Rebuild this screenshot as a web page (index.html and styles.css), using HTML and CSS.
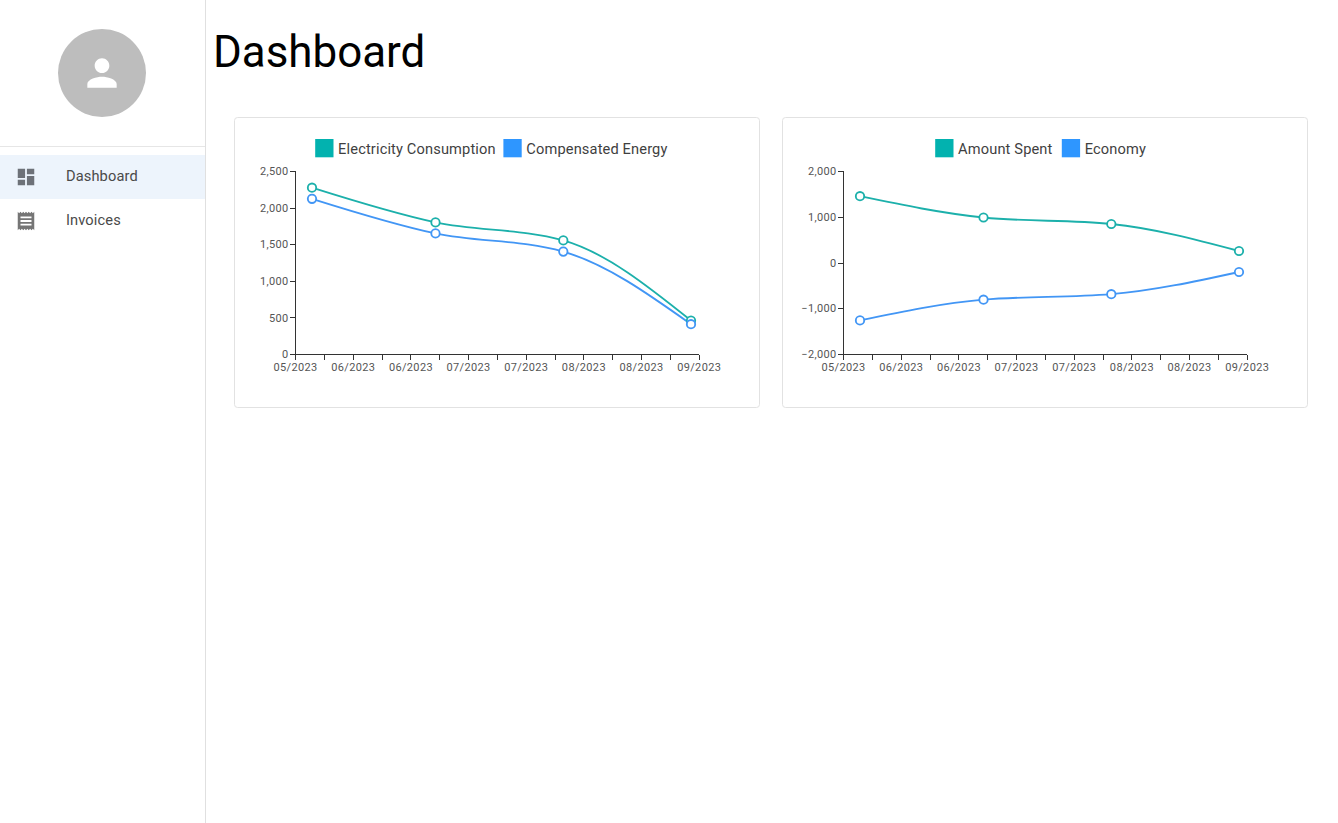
FILE: index.html
```html
<!DOCTYPE html>
<html lang="en">
<head>
<meta charset="utf-8">
<title>Dashboard</title>
<link rel="stylesheet" href="styles.css">
</head>
<body>
<div class="app">
  <aside class="sidebar">
    <div class="profile">
      <div class="avatar">
        <svg viewBox="0 0 24 24"><path d="M12 12c2.210 0 4-1.790 4-4s-1.790-4-4-4-4 1.790-4 4 1.790 4 4 4zm0 2c-2.670 0-8 1.340-8 4v2h16v-2c0-2.660-5.330-4-8-4z"/></svg>
      </div>
    </div>
    <nav class="menu">
      <a class="item selected">
        <svg viewBox="0 0 24 24"><path d="M3 13h8V3H3v10zm0 8h8v-6H3v6zm10 0h8V11h-8v10zm0-18v6h8V3h-8z"/></svg>
        <span>Dashboard</span>
      </a>
      <a class="item">
        <svg viewBox="0 0 24 24"><path d="M18 17H6v-2h12v2zm0-4H6v-2h12v2zm0-4H6V7h12v2zM3 22l1.500-1.500L6 22l1.500-1.500L9 22l1.500-1.500L12 22l1.500-1.500L15 22l1.500-1.500L18 22l1.500-1.500L21 22V2l-1.500 1.500L18 2l-1.500 1.500L15 2l-1.500 1.500L12 2l-1.500 1.500L9 2 7.500 3.500 6 2 4.500 3.500 3 2v20z"/></svg>
        <span>Invoices</span>
      </a>
    </nav>
  </aside>
  <main class="content">
    <h1 class="title">Dashboard</h1>
    <div class="cards">
      <section class="card"><svg class="chart" id="energy" viewBox="0 0 524 289"></svg></section>
      <section class="card"><svg class="chart" id="money" viewBox="0 0 524 289"></svg></section>
    </div>
  </main>
</div>
<script src="charts.js"></script>
</body>
</html>
```

FILE: styles.css
```css
* { box-sizing: border-box; }
body { margin: 0; background: #fff; font-family: Roboto, "Liberation Sans", sans-serif; }
.app { display: flex; height: 100vh; overflow: hidden; }
.sidebar { width: 206px; flex: none; border-right: 1px solid #e0e0e0; }
.profile { height: 147px; padding: 29px 1px 0 0; border-bottom: 1px solid #e6e6e6; display: flex; justify-content: center; align-items: flex-start; }
.avatar { width: 88px; height: 88px; border-radius: 50%; background: #bdbdbd; display: flex; align-items: center; justify-content: center; }
.avatar svg { width: 44px; height: 44px; fill: #fff; }
.menu { padding-top: 7.500px; }
.item { display: flex; align-items: center; height: 44px; padding-left: 14.500px; font-size: 14.640px; letter-spacing: 0.137px; color: #4a4a4a; }
.item svg { width: 22px; height: 22px; margin-right: 29.400px; fill: #757575; }
.item span { padding-bottom: 1.500px; }
.selected { background: #edf4fc; }
.selected svg { fill: #6d7178; }
.content { flex: 1; padding: 27px 29px 0 7px; }
.title { margin: 0; font-size: 43.900px; font-weight: 400; line-height: 51.500px; color: #000; }
.cards { display: grid; grid-template-columns: 526px 526px; gap: 22px; margin: 38px 0 0 21px; }
.card { height: 291px; border: 1px solid #e2e2e2; border-radius: 3.600px; }
.chart { display: block; width: 524px; height: 289px; }
.axis { stroke: #333; stroke-width: 1; fill: none; shape-rendering: crispEdges; }
.tick { font-size: 10.980px; letter-spacing: 0.366px; fill: #555; }
.tick-y { text-anchor: end; }
.tick-x { text-anchor: middle; }
.legend { font-size: 14.640px; letter-spacing: 0.137px; fill: #3f3f3f; }
.line { fill: none; stroke-width: 1.830; }
.mark { fill: #fff; stroke-width: 1.830; }
.teal { stroke: #1cb0ab; }
.blue { stroke: #4296f5; }
.swatch-teal { fill: #02b2af; }
.swatch-blue { fill: #2e96ff; }
```

FILE: charts.js
```js
const NS = "http://www.w3.org/2000/svg";
const LEFT = 60.6, TOP = 53.5, BOTTOM = 236.5, STEP = 28.83;
const POINTS_X = [77, 200.5, 328.3, 456];
const LABELS = ["05/2023", "06/2023", "06/2023", "07/2023", "07/2023", "08/2023", "08/2023", "09/2023"];

function add(svg, tag, attrs, text) {
  const el = document.createElementNS(NS, tag);
  for (const k in attrs) el.setAttribute(k, attrs[k]);
  if (text) el.textContent = text;
  svg.appendChild(el);
}

// Monotone cubic interpolation through the points
function monotone(xs, ys) {
  const n = xs.length, h = [], s = [], t = [];
  for (let i = 0; i < n - 1; i++) {
    h[i] = xs[i + 1] - xs[i];
    s[i] = (ys[i + 1] - ys[i]) / h[i];
  }
  for (let i = 1; i < n - 1; i++) {
    const p = (s[i - 1] * h[i] + s[i] * h[i - 1]) / (h[i - 1] + h[i]);
    t[i] = (Math.sign(s[i - 1]) + Math.sign(s[i])) * Math.min(Math.abs(s[i - 1]), Math.abs(s[i]), 0.5 * Math.abs(p));
  }
  t[0] = (3 * s[0] - t[1]) / 2;
  t[n - 1] = (3 * s[n - 2] - t[n - 2]) / 2;
  let d = `M${xs[0]},${ys[0]}`;
  for (let i = 0; i < n - 1; i++) {
    const k = h[i] / 3;
    d += `C${xs[i] + k},${ys[i] + k * t[i]},${xs[i + 1] - k},${ys[i + 1] - k * t[i + 1]},${xs[i + 1]},${ys[i + 1]}`;
  }
  return d;
}

function draw(id, yLabels, legend, series) {
  const svg = document.getElementById(id);
  const right = LEFT + STEP * 14;
  series.forEach(s => add(svg, "path", { class: "line " + s.color, d: monotone(POINTS_X, s.ys) }));
  add(svg, "path", { class: "axis", d: `M${LEFT},${TOP}V${BOTTOM}H${right}` });
  yLabels.forEach((label, i) => {
    const y = TOP + (BOTTOM - TOP) * i / (yLabels.length - 1);
    add(svg, "path", { class: "axis", d: `M${LEFT},${y}h-5.5` });
    add(svg, "text", { class: "tick tick-y", x: 53.6, y: y + 3.7 }, label);
  });
  for (let i = 0; i <= 14; i++) {
    const x = LEFT + STEP * i;
    add(svg, "path", { class: "axis", d: `M${x},${BOTTOM}v5.5` });
    if (i % 2 === 0) add(svg, "text", { class: "tick tick-x", x: x, y: 253 }, LABELS[i / 2]);
  }
  series.forEach(s => s.ys.forEach((y, i) =>
    add(svg, "circle", { class: "mark " + s.color, cx: POINTS_X[i], cy: y, r: 4.2 })));
  legend.forEach(l => {
    add(svg, "rect", { class: "swatch-" + l.color, x: l.x, y: 21, width: 18.3, height: 18.3 });
    add(svg, "text", { class: "legend", x: l.x + 22.9, y: 35.7 }, l.text);
  });
}

draw("energy", ["2,500", "2,000", "1,500", "1,000", "500", "0"],
  [{ color: "teal", x: 80.2, text: "Electricity Consumption" }, { color: "blue", x: 268.4, text: "Compensated Energy" }],
  [{ color: "teal", ys: [69.7, 104.4, 122.4, 202.5] }, { color: "blue", ys: [80.8, 115.4, 133.6, 206.2] }]);
draw("money", ["2,000", "1,000", "0", "−1,000", "−2,000"],
  [{ color: "teal", x: 152.2, text: "Amount Spent" }, { color: "blue", x: 278.8, text: "Economy" }],
  [{ color: "teal", ys: [78.2, 99.5, 106, 133] }, { color: "blue", ys: [202.4, 181.7, 176.2, 154] }]);
```
